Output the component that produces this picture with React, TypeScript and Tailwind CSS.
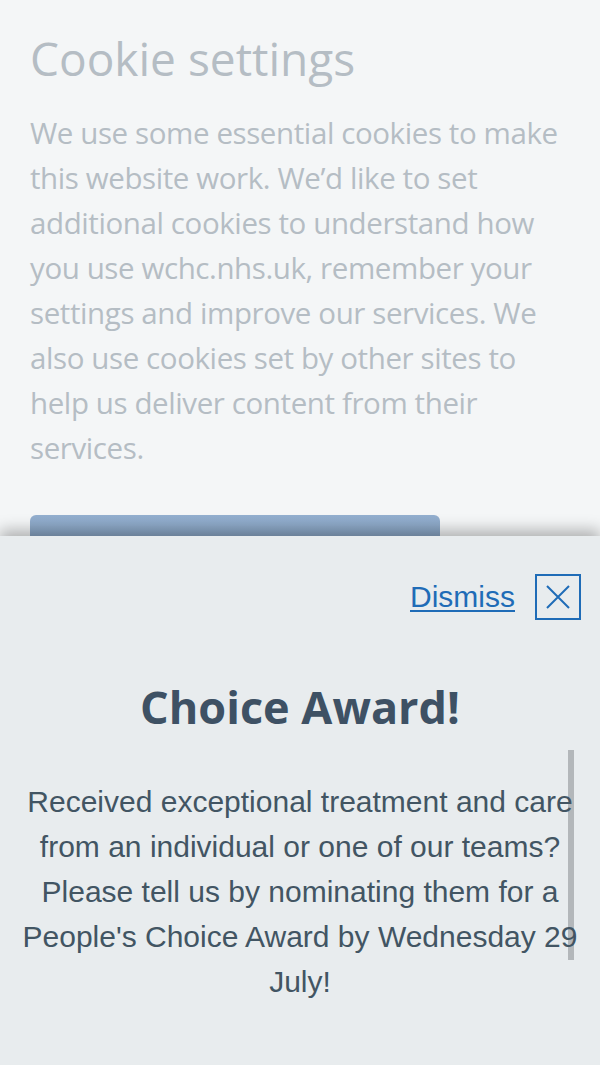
import React from 'react';

const App: React.FC = () => {
  return (
    <div className="relative w-[600px] h-[1065px] overflow-hidden bg-[#f4f6f7]">
      {/* Page behind the banner */}
      <div className="px-[30px] pt-[30px] font-['Open_Sans',sans-serif] text-[#b5bdc4]">
        <h1 className="text-[46px] leading-[56px]">Cookie settings</h1>
        <p className="mt-[24px] text-[29.5px] leading-[45px] tracking-[-0.4px]">
          We use some essential cookies to make this website work. We’d like to set additional cookies to understand how
          you use wchc.nhs.uk, remember your settings and improve our services. We also use cookies set by other sites to
          help us deliver content from their services.
        </p>
        <div className="mt-[45px] w-[410px] h-[60px] rounded-t-[6px] bg-gradient-to-b from-[#93afcf] to-[#7b96b4]" />
      </div>

      {/* Choice Award banner */}
      <div className="absolute left-0 right-0 top-[536px] bottom-0 bg-[#e8ecee] shadow-[0_-6px_14px_rgba(0,0,0,0.28)]">
        <div className="flex items-center justify-end gap-[20px] pt-[38px] pr-[19px]">
          <a href="#" className="font-['Liberation_Sans',Arial,sans-serif] text-[30px] leading-[32px] text-[#1f6cb7] underline underline-offset-[3px] decoration-[2px]">
            Dismiss
          </a>
          <button className="w-[46px] h-[46px] border-2 border-[#1f6cb7] flex items-center justify-center">
            <svg width="26" height="26" viewBox="0 0 26 26" fill="none" stroke="#1f6cb7" strokeWidth="2">
              <path d="M2 2L24 24M24 2L2 24" />
            </svg>
          </button>
        </div>

        <h2 className="mt-[60px] text-center font-['Open_Sans',sans-serif] font-bold text-[45px] leading-[54px] text-[#3e5164]">
          Choice Award!
        </h2>

        <div className="relative mt-[45px] px-[16px]">
          {/* scrollbar thumb */}
          <div className="absolute right-[26px] top-[-29px] w-[6px] h-[210px] bg-[#b3b7ba]" />
          <p className="relative text-center font-['Liberation_Sans',Arial,sans-serif] text-[30px] leading-[45px] text-[#425563]">
            Received exceptional treatment and care from an individual or one of our teams? Please tell us by nominating
            them for a People's Choice Award by Wednesday 29 July!
          </p>
        </div>
      </div>
    </div>
  );
};

export default App;
